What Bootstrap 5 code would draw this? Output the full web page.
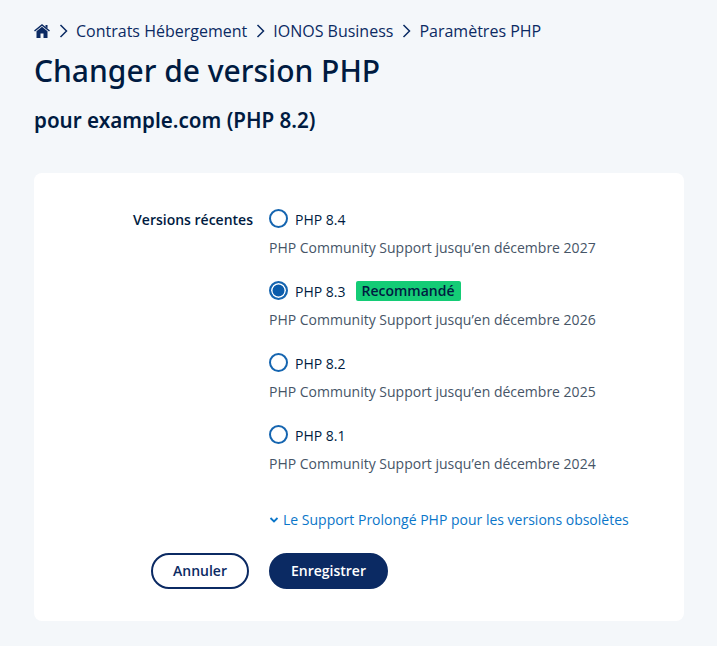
<!DOCTYPE html>
<html lang="fr">
<head>
  <meta charset="UTF-8">
  <title>Changer de version PHP</title>
  <link rel="stylesheet" href="https://cdn.jsdelivr.net/npm/bootstrap@5.3.2/dist/css/bootstrap.min.css">
  <style>
    body{
      background:#f4f7fa;
      font-family:"Open Sans",sans-serif;
      color:#001b41;
    }
    .page-wrap{
      padding:20px 33px 25px 34px;
    }
    .crumbs{
      font-size:16px;
      line-height:22px;
      color:#0b2a63;
    }
    .crumb-sep{
      margin:0 8.5px;
    }
    .page-title{
      font-family:"Noto Sans",sans-serif;
      font-size:30px;
      line-height:44px;
      font-weight:500;
      margin:7px 0 0;
      color:#001b41;
    }
    .page-sub{
      font-family:"Noto Sans",sans-serif;
      font-size:20.6px;
      line-height:28px;
      font-weight:600;
      margin:13px 0 39px;
      color:#001b41;
    }
    .panel{
      background:#fff;
      border-radius:8px;
      padding:33px 0 32px;
    }
    .side-label{
      width:235px;
      padding-right:16px;
      text-align:right;
      font-size:14px;
      font-weight:600;
      line-height:22px;
      margin-top:3px;
    }
    .php-option{
      height:72px;
    }
    .php-radio{
      width:19px;
      height:19px;
      border:2px solid #1565b0;
      border-radius:50%;
      background:#fff;
      flex:none;
      margin-right:7px;
      margin-top:-3px;
    }
    .php-radio.on{
      background:#0b5cab;
      box-shadow:inset 0 0 0 1.500px #fff;
    }
    .php-name{
      font-size:14px;
      line-height:28px;
    }
    .php-tag{
      background:#14cc76;
      color:#001b41;
      font-size:14px;
      font-weight:600;
      line-height:20px;
      padding:0 6px;
      border-radius:2px;
      margin-left:10px;
      margin-top:-2px;
    }
    .php-note{
      font-size:14px;
      line-height:28px;
      color:#465567;
    }
    .more-link{
      font-size:14px;
      line-height:20px;
      color:#0b76c9;
      text-decoration:none;
      margin-top:16px;
    }
    .btn-ghost,.btn-save{
      border-radius:18px;
      height:36px;
      font-size:14px;
      font-weight:600;
      padding:0 20px;
      line-height:32px;
    }
    .btn-ghost{
      border:2px solid #0b2a63;
      color:#0b2a63;
      background:#fff;
      width:98px;
    }
    .btn-save{
      border:2px solid #0b2a63;
      background:#0b2a63;
      color:#fff;
      width:119px;
    }
    .btn-row{
      margin-top:23px;
    }
    .btn-side{
      width:215px;
    }
  </style>
</head>
<body>
  <div class="page-wrap">
    <div class="crumbs d-flex align-items-center">
      <svg width="16" height="14" viewBox="0 0 16 14"><path fill="none" stroke="#0b2a63" stroke-width="1.500" d="M.5 7 8 1l7.500 6"/><path fill="#0b2a63" d="M11.500 1H13.500V4.500L11.500 3zM8 2.800l5.500 4.400V14H9.500V9.500h-3V14H2.500V7.200z"/></svg>
      <svg class="crumb-sep" width="9" height="14" viewBox="0 0 9 14"><path fill="none" stroke="#0b2a63" stroke-width="1.500" d="M1.500 1 7.500 7l-6 6"/></svg>
      <span>Contrats Hébergement</span>
      <svg class="crumb-sep" width="9" height="14" viewBox="0 0 9 14"><path fill="none" stroke="#0b2a63" stroke-width="1.500" d="M1.500 1 7.500 7l-6 6"/></svg>
      <span>IONOS Business</span>
      <svg class="crumb-sep" width="9" height="14" viewBox="0 0 9 14"><path fill="none" stroke="#0b2a63" stroke-width="1.500" d="M1.500 1 7.500 7l-6 6"/></svg>
      <span>Paramètres PHP</span>
    </div>
    <h1 class="page-title">Changer de version PHP</h1>
    <h2 class="page-sub">pour example.com (PHP 8.2)</h2>

    <div class="panel">
      <div class="d-flex">
        <div class="side-label">Versions récentes</div>
        <div>
          <div class="php-option">
            <div class="d-flex align-items-center"><span class="php-radio"></span><span class="php-name">PHP 8.4</span></div>
            <div class="php-note">PHP Community Support jusqu’en décembre 2027</div>
          </div>
          <div class="php-option">
            <div class="d-flex align-items-center"><span class="php-radio on"></span><span class="php-name">PHP 8.3</span><span class="php-tag">Recommandé</span></div>
            <div class="php-note">PHP Community Support jusqu’en décembre 2026</div>
          </div>
          <div class="php-option">
            <div class="d-flex align-items-center"><span class="php-radio"></span><span class="php-name">PHP 8.2</span></div>
            <div class="php-note">PHP Community Support jusqu’en décembre 2025</div>
          </div>
          <div class="php-option">
            <div class="d-flex align-items-center"><span class="php-radio"></span><span class="php-name">PHP 8.1</span></div>
            <div class="php-note">PHP Community Support jusqu’en décembre 2024</div>
          </div>
          <a class="more-link d-flex align-items-center gap-1" href="#">
            <svg width="10" height="8" viewBox="0 0 10 8"><path fill="none" stroke="#0b76c9" stroke-width="1.800" d="M1.500 2 5 5.500 8.500 2"/></svg>
            Le Support Prolongé PHP pour les versions obsolètes
          </a>
        </div>
      </div>
      <div class="d-flex btn-row">
        <div class="btn-side d-flex justify-content-end"><button class="btn-ghost">Annuler</button></div>
        <div class="ms-3 ps-1"><button class="btn-save">Enregistrer</button></div>
      </div>
    </div>
  </div>
  <script src="https://cdn.jsdelivr.net/npm/bootstrap@5.3.2/dist/js/bootstrap.bundle.min.js"></script>
</body>
</html>
